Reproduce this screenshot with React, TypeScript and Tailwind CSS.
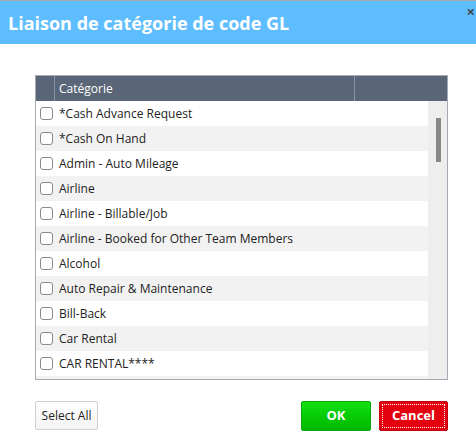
import React from 'react';

const categories = [
  '*Cash Advance Request',
  '*Cash On Hand',
  'Admin - Auto Mileage',
  'Airline',
  'Airline - Billable/Job',
  'Airline - Booked for Other Team Members',
  'Alcohol',
  'Auto Repair & Maintenance',
  'Bill-Back',
  'Car Rental',
  'CAR RENTAL****',
];

export default function App() {
  return (
    <div
      className="w-[476px] h-[440px] bg-white border-t border-[#a8a8a8] overflow-hidden"
      style={{ fontFamily: '"Open Sans", "Noto Sans", sans-serif' }}
    >
      {/* title bar */}
      <div className="relative h-[43px] bg-[#5ebdfe] flex items-center pl-[8px]">
        <span className="text-white font-bold text-[18px] leading-none">Liaison de catégorie de code GL</span>
        <span className="absolute right-[1px] top-[3px] text-[#3f4a58] text-[15px] font-bold leading-none">×</span>
      </div>

      <div className="pl-[35px] pr-[28px] pt-[31px]">
        {/* grid */}
        <div className="h-[305px] border border-[#a3aab3] flex flex-col">
          <div className="h-[25px] bg-[#5a6678] flex text-white text-[12px] shrink-0">
            <div className="w-[19px] border-r border-[#8893a3]" />
            <div className="w-[300px] border-r border-[#8893a3] flex items-center pl-[4px]">Catégorie</div>
            <div className="flex-1" />
          </div>
          <div className="flex-1 flex overflow-hidden">
            <div className="flex-1 overflow-hidden">
              {categories.map((c, i) => (
                <div
                  key={c}
                  className={`h-[25px] flex items-center text-[12px] text-[#222] ${i % 2 ? 'bg-[#f2f2f2]' : 'bg-white'}`}
                >
                  <span className="ml-[4px] w-[13px] h-[13px] rounded-[3px] border border-[#8a8a8a] bg-white shrink-0" />
                  <span className="ml-[6px] whitespace-nowrap">{c}</span>
                </div>
              ))}
              <div className="h-[25px] bg-[#f2f2f2]" />
            </div>
            <div className="w-[19px] bg-[#eeeeee] pt-[17px] flex justify-center">
              <div className="w-[5px] h-[44px] bg-[#888888] ml-[1px]" />
            </div>
          </div>
        </div>

        {/* buttons */}
        <div className="flex items-start mt-[21px]">
          <button className="w-[63px] h-[29px] border border-[#cfcfcf] rounded-[2px] bg-gradient-to-b from-white to-[#f4f4f4] text-[12px] text-[#222]">
            Select All
          </button>
          <div className="flex-1" />
          <button className="w-[70px] h-[30px] rounded-[2px] border border-[#0aa30a] bg-gradient-to-b from-[#10e010] to-[#00b800] text-white font-bold text-[13px]">
            OK
          </button>
          <button className="ml-[8px] w-[69px] h-[30px] rounded-[2px] border border-[#c10010] bg-[#e3000f] p-[2px]">
            <span className="w-full h-full flex items-center justify-center border border-dotted border-white text-white font-bold text-[13px]">
              Cancel
            </span>
          </button>
        </div>
      </div>
    </div>
  );
}
